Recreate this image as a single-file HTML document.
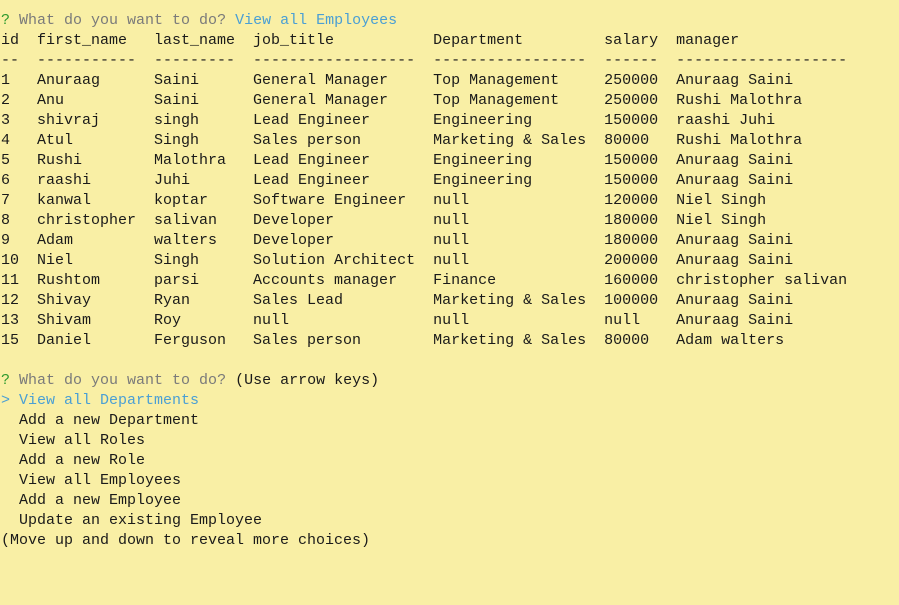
<!DOCTYPE html>
<html><head><meta charset="utf-8"><style>
html,body{margin:0;padding:0;background:#f9efa5;width:899px;height:605px;overflow:hidden}
pre{margin:0;padding:11px 0 0 1px;font-family:"Liberation Mono",monospace;font-size:15px;line-height:20px;color:#1a1a1a;white-space:pre}
.g{color:#2e9a2e}.q{color:#7a7a7a}.b{color:#4a9fd4}
</style></head><body><pre><span class="g">?</span> <span class="q">What do you want to do?</span> <span class="b">View all Employees</span>
id  first_name   last_name  job_title           Department         salary  manager
--  -----------  ---------  ------------------  -----------------  ------  -------------------
1   Anuraag      Saini      General Manager     Top Management     250000  Anuraag Saini
2   Anu          Saini      General Manager     Top Management     250000  Rushi Malothra
3   shivraj      singh      Lead Engineer       Engineering        150000  raashi Juhi
4   Atul         Singh      Sales person        Marketing &amp; Sales  80000   Rushi Malothra
5   Rushi        Malothra   Lead Engineer       Engineering        150000  Anuraag Saini
6   raashi       Juhi       Lead Engineer       Engineering        150000  Anuraag Saini
7   kanwal       koptar     Software Engineer   null               120000  Niel Singh
8   christopher  salivan    Developer           null               180000  Niel Singh
9   Adam         walters    Developer           null               180000  Anuraag Saini
10  Niel         Singh      Solution Architect  null               200000  Anuraag Saini
11  Rushtom      parsi      Accounts manager    Finance            160000  christopher salivan
12  Shivay       Ryan       Sales Lead          Marketing &amp; Sales  100000  Anuraag Saini
13  Shivam       Roy        null                null               null    Anuraag Saini
15  Daniel       Ferguson   Sales person        Marketing &amp; Sales  80000   Adam walters

<span class="g">?</span> <span class="q">What do you want to do?</span> (Use arrow keys)
<span class="b">&gt; View all Departments</span>
  Add a new Department
  View all Roles
  Add a new Role
  View all Employees
  Add a new Employee
  Update an existing Employee
(Move up and down to reveal more choices)</pre></body></html>
